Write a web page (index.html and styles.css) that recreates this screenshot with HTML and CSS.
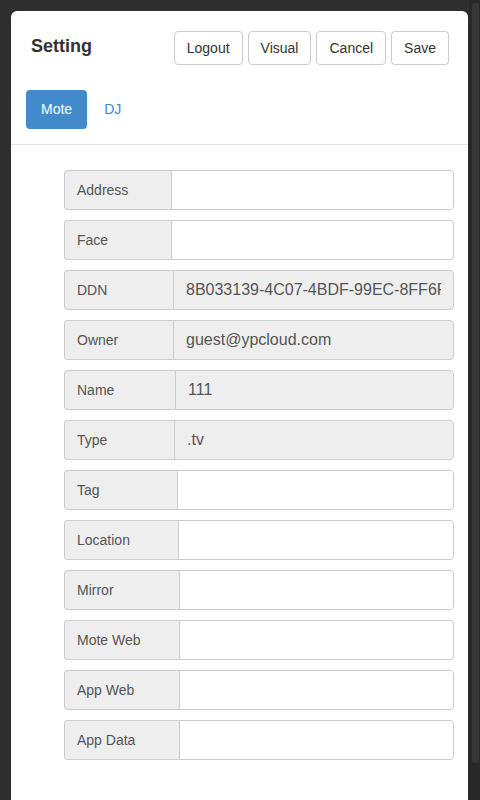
FILE: index.html
```html
<!DOCTYPE html>
<html>
<head>
<meta charset="utf-8">
<link rel="stylesheet" href="styles.css">
</head>
<body>
<div class="backdrop">
  <div class="modal">
    <div class="modal-header">
      <h4 class="modal-title">Setting</h4>
      <div class="actions">
        <button class="btn">Logout</button>
        <button class="btn">Visual</button>
        <button class="btn">Cancel</button>
        <button class="btn">Save</button>
      </div>
    </div>
    <div class="tabs">
      <a class="pill active">Mote</a>
      <a class="pill">DJ</a>
    </div>
    <div class="modal-body">
      <div class="input-group"><span class="addon w107">Address</span><input class="field" type="text" value=""></div>
      <div class="input-group"><span class="addon w107">Face</span><input class="field" type="text" value=""></div>
      <div class="input-group"><span class="addon w109">DDN</span><input class="field" type="text" readonly value="8B033139-4C07-4BDF-99EC-8FF6F0A1B2C3"></div>
      <div class="input-group"><span class="addon w109">Owner</span><input class="field" type="text" readonly value="guest@ypcloud.com"></div>
      <div class="input-group"><span class="addon w111">Name</span><input class="field" type="text" readonly value="111"></div>
      <div class="input-group"><span class="addon w110">Type</span><input class="field" type="text" readonly value=".tv"></div>
      <div class="input-group"><span class="addon w113">Tag</span><input class="field" type="text" value=""></div>
      <div class="input-group"><span class="addon w114">Location</span><input class="field" type="text" value=""></div>
      <div class="input-group"><span class="addon w115">Mirror</span><input class="field" type="text" value=""></div>
      <div class="input-group"><span class="addon w115">Mote Web</span><input class="field" type="text" value=""></div>
      <div class="input-group"><span class="addon w115">App Web</span><input class="field" type="text" value=""></div>
      <div class="input-group"><span class="addon w115">App Data</span><input class="field" type="text" value=""></div>
    </div>
  </div>
  <div class="scrollbar"><div class="thumb"></div></div>
</div>
</body>
</html>
```

FILE: styles.css
```css
html, body {
  margin: 0;
  padding: 0;
  height: 800px;
  overflow: hidden;
  background: #2e2e2e;
  font-family: "Liberation Sans", Arial, sans-serif;
  font-size: 14px;
  color: #333;
}

.backdrop {
  display: flex;
  height: 800px;
  overflow: hidden;
}

.modal {
  margin: 11px 0 0 11px;
  width: 457px;
  height: 789px;
  overflow: hidden;
  background: #fff;
  border-radius: 6px 6px 0 0;
  flex: none;
}

.modal-header {
  display: flex;
  justify-content: space-between;
  align-items: flex-start;
  padding: 20px 19px 10px 20px;
}

.modal-title {
  margin: 5px 0 0 0;
  font-size: 18px;
  line-height: 20px;
  font-weight: bold;
  color: #333;
}

.actions {
  display: flex;
  gap: 5px;
}

.btn {
  height: 34px;
  padding: 6px 12px;
  font-family: "Liberation Sans", Arial, sans-serif;
  font-size: 14px;
  line-height: 20px;
  color: #333;
  background: #fff;
  border: 1px solid #ccc;
  border-radius: 4px;
  box-sizing: border-box;
}

.tabs {
  display: flex;
  gap: 2px;
  padding: 15px;
  border-bottom: 1px solid #e5e5e5;
}

.pill {
  display: block;
  padding: 10px 15px;
  line-height: 19px;
  font-size: 14px;
  color: #428bca;
  border-radius: 4px;
}

.pill.active {
  background: #428bca;
  color: #fff;
}

.modal-body {
  padding: 25px 14px 0 53px;
  display: flex;
  flex-direction: column;
  gap: 10px;
}

.input-group {
  display: flex;
  height: 40px;
}

.addon {
  display: flex;
  align-items: center;
  box-sizing: border-box;
  padding: 0 12px;
  background: #eee;
  border: 1px solid #ccc;
  border-right: 0;
  border-radius: 4px 0 0 4px;
  color: #555;
  font-size: 14px;
  white-space: nowrap;
  flex: none;
}

.w107 { width: 107px; }
.w109 { width: 109px; }
.w110 { width: 110px; }
.w111 { width: 111px; }
.w113 { width: 113px; }
.w114 { width: 114px; }
.w115 { width: 115px; }

.field {
  flex: 1;
  min-width: 0;
  box-sizing: border-box;
  height: 40px;
  margin: 0;
  padding: 0 12px;
  border: 1px solid #ccc;
  border-radius: 0 4px 4px 0;
  background: #fff;
  color: #555;
  font-family: "Liberation Sans", Arial, sans-serif;
  font-size: 16px;
  outline: none;
}

.field[readonly] {
  background: #eee;
}

.scrollbar {
  margin-left: 1px;
  flex: 1;
  background: #282828;
  padding: 3px 1px 0 3px;
}

.thumb {
  height: 760px;
  background: #363636;
  border-radius: 4px;
}
```
